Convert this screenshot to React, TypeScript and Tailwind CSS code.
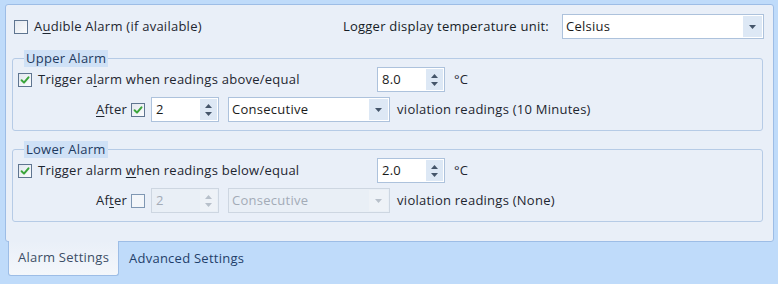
import React from "react";

const Check = ({ checked, disabled }: { checked?: boolean; disabled?: boolean }) => (
  <span
    className={`inline-flex items-center justify-center w-[14px] h-[14px] border shrink-0 ${
      disabled ? "border-[#7f97b3] bg-[#f3f6fa]" : "border-[#5f7590] bg-gradient-to-br from-[#e3e8ef] to-[#fbfcfd]"
    }`}
  >
    {checked && (
      <svg width="10" height="10" viewBox="0 0 10 10">
        <path d="M1.6 5.3 L4 7.6 L8.5 2.3" fill="none" stroke="#3aa53a" strokeWidth="2" strokeLinecap="round" strokeLinejoin="round" />
      </svg>
    )}
  </span>
);

const U = ({ children }: { children: React.ReactNode }) => <span className="underline underline-offset-2">{children}</span>;

const Spin = ({ value, disabled }: { value: string; disabled?: boolean }) => (
  <div
    className={`flex items-stretch h-[25px] w-[68px] border ${
      disabled ? "border-[#cdd6e1] bg-[#e9eff6] text-[#a3abb6]" : "border-[#adc2dc] bg-white text-[#1b1b1b]"
    }`}
  >
    <div className="flex-1 pl-[4px] flex items-center">{value}</div>
    <div className={`w-[17px] my-[1px] mr-[1px] flex flex-col items-center justify-center gap-[4px] ${disabled ? "bg-[#eef2f7]" : "bg-[#dde8f5]"}`}>
      <svg width="7" height="4" viewBox="0 0 7 4"><path d="M0 4 L3.5 0 L7 4 Z" fill={disabled ? "#b8c0ca" : "#44556a"} /></svg>
      <svg width="7" height="4" viewBox="0 0 7 4"><path d="M0 0 L3.5 4 L7 0 Z" fill={disabled ? "#b8c0ca" : "#44556a"} /></svg>
    </div>
  </div>
);

const Drop = ({ value, disabled, w }: { value: string; disabled?: boolean; w: string }) => (
  <div
    className={`flex items-stretch h-[25px] ${w} border ${
      disabled ? "border-[#cdd6e1] bg-[#e9eff6] text-[#a3abb6]" : "border-[#adc2dc] bg-white text-[#1b1b1b]"
    }`}
  >
    <div className="flex-1 pl-[3px] flex items-center">{value}</div>
    <div className={`w-[19px] my-[1px] mr-[1px] flex items-center justify-center ${disabled ? "bg-[#eef2f7]" : "bg-[#dde8f5]"}`}>
      <svg width="7" height="4" viewBox="0 0 7 4"><path d="M0 0 L3.5 4 L7 0 Z" fill={disabled ? "#b8c0ca" : "#44556a"} /></svg>
    </div>
  </div>
);

const Group = ({ title, children }: { title: string; children: React.ReactNode }) => (
  <fieldset className="ml-[6px] mr-[10px] border border-[#b6cbe6] rounded-[3px] px-0 pb-[8px]">
    <legend className="ml-[11px] px-[2px] h-[17px] leading-[17px] bg-[#cfe1f6] text-[#1e3a5f]">{title}</legend>
    {children}
  </fieldset>
);

export default function App() {
  return (
    <div
      className="w-[778px] h-[284px] bg-[#bfdbfa] pt-[4px] text-[13px] tracking-[0.25px] text-[#1e2630]"
      style={{ fontFamily: '"Open Sans", "Noto Sans", sans-serif' }}
    >
      <div className="ml-[5px] w-[769px] h-[238px] bg-[#e9eff8] border border-[#9dbde6] rounded-[3px] pt-[9px]">
        <div className="flex items-center h-[25px] pl-[8px] pr-[9px]">
          <Check />
          <span className="ml-[6px]">
            A<U>u</U>dible Alarm (if available)
          </span>
          <span className="ml-auto mr-[13px] font-medium text-[#161d27]">Logger display temperature unit:</span>
          <Drop value="Celsius" w="w-[202px]" />
        </div>

        <div className="mt-[11px]">
          <Group title="Upper Alarm">
            <div className="flex items-center h-[25px] pl-[5px]">
              <div className="w-[359px] flex items-center">
                <Check checked />
                <span className="ml-[6px]">
                  Trigger a<U>l</U>arm when readings above/equal
                </span>
              </div>
              <Spin value="8.0" />
              <span className="ml-[9px]">°C</span>
            </div>
            <div className="flex items-center h-[25px] mt-[5px] pl-[83px]">
              <span>
                <U>A</U>fter
              </span>
              <span className="ml-[4px] flex"><Check checked /></span>
              <span className="ml-[6px]"><Spin value="2" /></span>
              <span className="ml-[9px]"><Drop value="Consecutive" w="w-[162px]" /></span>
              <span className="ml-[7px]">violation readings (10 Minutes)</span>
            </div>
          </Group>
        </div>

        <div className="mt-[10px]">
          <Group title="Lower Alarm">
            <div className="flex items-center h-[25px] pl-[5px]">
              <div className="w-[359px] flex items-center">
                <Check checked />
                <span className="ml-[6px]">
                  Trigger alarm <U>w</U>hen readings below/equal
                </span>
              </div>
              <Spin value="2.0" />
              <span className="ml-[9px]">°C</span>
            </div>
            <div className="flex items-center h-[25px] mt-[5px] pl-[83px]">
              <span>
                Af<U>t</U>er
              </span>
              <span className="ml-[4px] flex"><Check disabled /></span>
              <span className="ml-[6px]"><Spin value="2" disabled /></span>
              <span className="ml-[9px]"><Drop value="Consecutive" w="w-[162px]" disabled /></span>
              <span className="ml-[7px]">violation readings (None)</span>
            </div>
          </Group>
        </div>
      </div>

      <div className="flex items-start ml-[8px] -mt-[1px]">
        <div className="w-[111px] h-[35px] bg-gradient-to-b from-[#e9eff8] to-[#f4f7fb] border border-t-0 border-[#9dbde6] rounded-b-[3px] flex items-center justify-center text-[#3c4e66]">
          Alarm Settings
        </div>
        <div className="h-[35px] flex items-center ml-[10px] text-[#1f3f6a]">Advanced Settings</div>
      </div>
    </div>
  );
}
